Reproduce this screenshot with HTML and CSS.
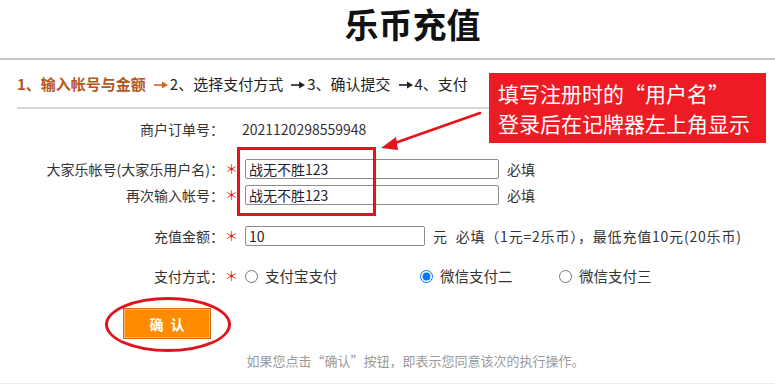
FILE: index.html
```html
<!DOCTYPE html>
<html lang="zh-CN">
<head>
<meta charset="utf-8">
<title>乐币充值</title>
<link rel="stylesheet" href="styles.css">
</head>
<body>
<div class="page">
  <header class="head">
    <h1 class="title">乐币充值</h1>
  </header>

  <nav class="steps">
    <span class="step step-on">1、输入帐号与金额</span>
    <svg class="arr arr-on" viewBox="0 0 14 8" width="14" height="8"><path d="M0 4H9" stroke="currentColor" stroke-width="1.6"/><path d="M8 0.5L14 4L8 7.5Z" fill="currentColor"/></svg>
    <span class="step">2、选择支付方式</span>
    <svg class="arr" viewBox="0 0 14 8" width="14" height="8"><path d="M0 4H9" stroke="currentColor" stroke-width="1.6"/><path d="M8 0.5L14 4L8 7.5Z" fill="currentColor"/></svg>
    <span class="step">3、确认提交</span>
    <svg class="arr" viewBox="0 0 14 8" width="14" height="8"><path d="M0 4H9" stroke="currentColor" stroke-width="1.6"/><path d="M8 0.5L14 4L8 7.5Z" fill="currentColor"/></svg>
    <span class="step">4、支付</span>
  </nav>

  <form class="form">
    <div class="row row-order">
      <span class="lbl">商户订单号：</span>
      <span class="star"></span>
      <span class="val">2021120298559948</span>
    </div>
    <div class="row row-acc">
      <span class="lbl">大家乐帐号(大家乐用户名)：</span>
      <span class="star">＊</span>
      <span class="field"><input class="inp inp-long" type="text" value="战无不胜123"><span class="hint">必填</span></span>
    </div>
    <div class="row row-acc2">
      <span class="lbl">再次输入帐号：</span>
      <span class="star">＊</span>
      <span class="field"><input class="inp inp-long" type="text" value="战无不胜123"><span class="hint">必填</span></span>
    </div>
    <div class="row row-amt">
      <span class="lbl">充值金额：</span>
      <span class="star">＊</span>
      <span class="field"><input class="inp inp-short" type="text" value="10"><span class="hint hint-wide">元&nbsp;&nbsp;必填（1元=2乐币），最低充值10元(20乐币)</span></span>
    </div>
    <div class="row row-pay">
      <span class="lbl">支付方式：</span>
      <span class="star">＊</span>
      <span class="field opts">
        <label class="opt opt-a"><input type="radio" name="pay">支付宝支付</label>
        <label class="opt opt-b"><input type="radio" name="pay" checked>微信支付二</label>
        <label class="opt"><input type="radio" name="pay">微信支付三</label>
      </span>
    </div>
    <div class="btn-row">
      <button class="btn" type="button">确认</button>
    </div>
  </form>

  <p class="note">如果您点击“确认”按钮，即表示您同意该次的执行操作。</p>

  <div class="mark-rect"></div>
  <div class="mark-ellipse"></div>
  <svg class="mark-arrow" width="120" height="60" viewBox="0 0 120 60">
    <path d="M104 9 L16 40" stroke="#e8121c" stroke-width="2.6" stroke-linecap="round"/>
    <path d="M5 44 L20 33 L22 46 Z" fill="#e8121c"/>
  </svg>
  <div class="callout">
    <div>填写注册时的“用户名”</div>
    <div>登录后在记牌器左上角显示</div>
  </div>
</div>
</body>
</html>
```

FILE: styles.css
```css
* { box-sizing: border-box; }
html, body { margin: 0; padding: 0; background: #fff; }
body {
  font-family: "Noto Sans CJK SC", "Noto Sans", sans-serif;
  font-size: 14px;
  color: #333;
}
.page {
  position: relative;
  width: 775px;
  height: 387px;
  overflow: hidden;
}
.head {
  height: 60px;
  border-bottom: 2px solid #c6c6c6;
  padding-left: 50px;
  text-align: center;
}
.title {
  margin: 0;
  font-size: 34px;
  line-height: 48px;
  font-weight: 700;
  color: #111;
}
.steps {
  display: flex;
  align-items: center;
  height: 49px;
  margin: 0 17px;
  padding-top: 1px;
  border-bottom: 2px solid #d7d7d9;
  color: #222;
  font-size: 15px;
  line-height: 20px;
}
.step-on { font-weight: 700; color: #b5561c; }
.arr { margin: 1px 2px 0 8px; color: #222; }
.arr-on { color: #c8682a; }

.form { margin: 0; padding-top: 10px; }
.row {
  display: grid;
  grid-template-columns: 224px 21px auto;
  align-items: center;
  height: 20px;
  line-height: 20px;
}
.row-acc { margin-top: 20px; }
.row-acc2 { margin-top: 6px; }
.row-amt { margin-top: 21px; }
.row-pay { margin-top: 20px; }
.lbl { text-align: right; color: #333; white-space: nowrap; }
.star { color: #e8141c; font-size: 13px; padding-left: 1px; }
.val { color: #333; margin-left: -3px; }
.field { display: flex; align-items: center; }
.inp {
  height: 20px;
  border: 1px solid #8c8c8c;
  border-radius: 2px;
  padding: 0 3px;
  font-family: "Noto Sans CJK SC", "Noto Sans", sans-serif;
  font-size: 14px;
  color: #1c2230;
  background: #fff;
  outline: none;
}
.inp-long { width: 254px; }
.inp-short { width: 180px; }
.hint { margin-left: 8px; color: #333; white-space: nowrap; }
.hint-wide { letter-spacing: 0.8px; }
.opts { gap: 0; }
.opt { display: flex; align-items: center; color: #333; white-space: nowrap; font-size: 14.5px; }
.opt input { margin: 0 7px 0 0; width: 13px; height: 13px; }
.opt-a { width: 175px; }
.opt-b { width: 139px; }

.btn-row { margin-top: 22px; padding-left: 123px; }
.btn {
  width: 88px;
  height: 31px;
  border: 1px solid #d8690c;
  box-shadow: inset 0 0 0 1px #ffb466;
  background: #ff8b00;
  color: #fff;
  font-family: "Noto Sans CJK SC", "Noto Sans", sans-serif;
  font-size: 14px;
  font-weight: 700;
  letter-spacing: 7px;
  padding: 0 0 0 7px;
}
.note {
  margin: 12px 0 0;
  padding-left: 56px;
  text-align: center;
  font-size: 13px;
  line-height: 20px;
  color: #9a9a9a;
  height: 33px;
  border-bottom: 1px solid #ececec;
}

.mark-rect {
  position: absolute;
  left: 237px;
  top: 147px;
  width: 139px;
  height: 69px;
  border: 3px solid #e8121c;
}
.mark-ellipse {
  position: absolute;
  left: 105px;
  top: 297px;
  width: 126px;
  height: 55px;
  border: 3px solid #e0141e;
  border-radius: 50%;
}
.mark-arrow {
  position: absolute;
  left: 376px;
  top: 104px;
}
.callout {
  position: absolute;
  left: 489px;
  top: 73px;
  width: 277px;
  height: 70px;
  padding: 5px 0 0 9px;
  background: #ed1c24;
  color: #fff;
  font-size: 21px;
  line-height: 30px;
  white-space: nowrap;
}
```
